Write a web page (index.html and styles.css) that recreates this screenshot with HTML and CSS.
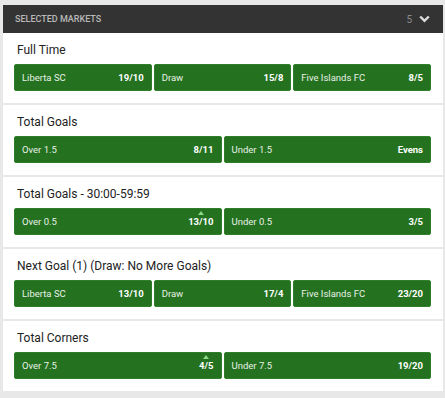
FILE: index.html
```html
<!DOCTYPE html>
<html lang="en">
<head>
    <meta charset="UTF-8">
    <title>Selected Markets</title>
    <link rel="stylesheet" href="styles.css">
</head>
<body>
    <div class="markets">
        <div class="markets-header">
            <span class="markets-title">Selected Markets</span>
            <span class="markets-count">5</span>
            <svg class="chevron" width="11" height="8" viewBox="0 0 11 8">
                <path d="M1.2 1.5 L5.5 5.8 L9.8 1.5" fill="none" stroke="#dcdcdc" stroke-width="2.4"/>
            </svg>
        </div>

        <div class="market">
            <div class="market-name">Full Time</div>
            <div class="outcomes">
                <div class="outcome"><span class="label">Liberta SC</span><span class="odds">19/10</span></div>
                <div class="outcome"><span class="label">Draw</span><span class="odds">15/8</span></div>
                <div class="outcome"><span class="label">Five Islands FC</span><span class="odds">8/5</span></div>
            </div>
        </div>

        <div class="market">
            <div class="market-name">Total Goals</div>
            <div class="outcomes">
                <div class="outcome"><span class="label">Over 1.5</span><span class="odds">8/11</span></div>
                <div class="outcome"><span class="label">Under 1.5</span><span class="odds">Evens</span></div>
            </div>
        </div>

        <div class="market">
            <div class="market-name">Total Goals - 30:00-59:59</div>
            <div class="outcomes">
                <div class="outcome"><span class="label">Over 0.5</span><span class="odds up">13/10</span></div>
                <div class="outcome"><span class="label">Under 0.5</span><span class="odds">3/5</span></div>
            </div>
        </div>

        <div class="market">
            <div class="market-name">Next Goal (1) (Draw: No More Goals)</div>
            <div class="outcomes">
                <div class="outcome"><span class="label">Liberta SC</span><span class="odds">13/10</span></div>
                <div class="outcome"><span class="label">Draw</span><span class="odds">17/4</span></div>
                <div class="outcome"><span class="label">Five Islands FC</span><span class="odds">23/20</span></div>
            </div>
        </div>

        <div class="market">
            <div class="market-name">Total Corners</div>
            <div class="outcomes">
                <div class="outcome"><span class="label">Over 7.5</span><span class="odds up">4/5</span></div>
                <div class="outcome"><span class="label">Under 7.5</span><span class="odds">19/20</span></div>
            </div>
        </div>
    </div>
</body>
</html>
```

FILE: styles.css
```css
body {
    font-family: Roboto, "Liberation Sans", Arial, sans-serif;
    margin: 0;
    background-color: #e8e8e8;
}

.markets {
    width: 440px;
    margin: 5px 0 0 3px;
}

.markets-header {
    display: flex;
    align-items: center;
    height: 28px;
    padding: 0 13px 0 12px;
    background-color: #333333;
}

.markets-title {
    flex: 1;
    color: #b9b9b9;
    font-size: 9px;
    font-weight: 500;
    text-transform: uppercase;
}

.markets-count {
    color: #8a8a8a;
    font-size: 10px;
    margin-right: 7px;
}

.chevron {
    display: block;
}

.market {
    background-color: #ffffff;
    padding: 7px 12px 12px 11px;
    margin-bottom: 2px;
}

.market-name {
    font-size: 12px;
    line-height: 20px;
    color: #222222;
    padding-left: 3px;
    margin-bottom: 4px;
}

.outcomes {
    display: flex;
    gap: 2px;
}

.outcome {
    flex: 1;
    display: flex;
    align-items: center;
    justify-content: space-between;
    height: 27px;
    box-sizing: border-box;
    padding: 0 7px 0 7px;
    background-color: #24721f;
    border: 1px solid #2f7f2a;
    border-radius: 2px;
    color: #ffffff;
    font-size: 9.5px;
}

.label {
    color: #e8f0e7;
}

.odds {
    font-weight: bold;
    position: relative;
}

.odds.up::before {
    content: "";
    position: absolute;
    top: -5px;
    left: 50%;
    margin-left: -3px;
    border-left: 3px solid transparent;
    border-right: 3px solid transparent;
    border-bottom: 4px solid #8ed889;
}
```
